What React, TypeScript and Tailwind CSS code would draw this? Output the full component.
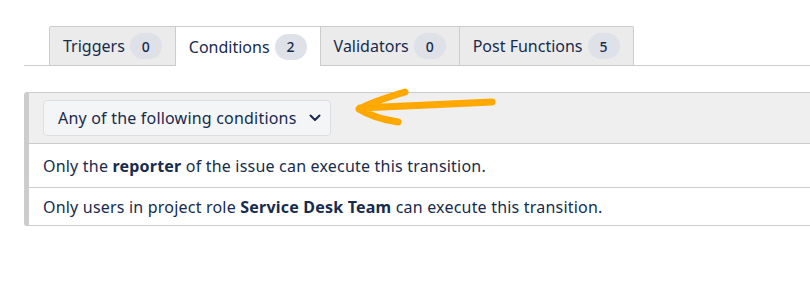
import * as React from "react";

type Tab = { label: string; count: number };

const tabs: Tab[] = [
  { label: "Triggers", count: 0 },
  { label: "Conditions", count: 2 },
  { label: "Validators", count: 0 },
  { label: "Post Functions", count: 5 },
];

const active = "Conditions";

function Chevron() {
  return (
    <svg width="12" height="8" viewBox="0 0 12 8" fill="none">
      <path d="M1.5 1.5 6 6l4.5-4.5" stroke="#172b4d" strokeWidth="2" strokeLinecap="round" strokeLinejoin="round" />
    </svg>
  );
}

// hand-drawn annotation arrow pointing at the dropdown
function Arrow() {
  return (
    <svg className="absolute left-[330px] top-[84px]" width="180" height="50" viewBox="0 0 180 50" fill="none">
      <path
        d="M162 18 C120 20 70 22 30 24 M75 8 C55 14 40 19 29 25 C40 32 55 36 68 38"
        stroke="#ffa800"
        strokeWidth="7"
        strokeLinecap="round"
        strokeLinejoin="round"
      />
    </svg>
  );
}

export default function App() {
  return (
    <div className="relative w-[810px] h-[290px] overflow-hidden bg-white pl-[24px] pt-[26px] text-[#172b4d] font-['Noto_Sans',sans-serif]">
      {/* tabs */}
      <div className="flex border-b border-[#cccccc] pl-[25px]">
        {tabs.map((t) => {
          const isActive = t.label === active;
          return (
            <div
              key={t.label}
              className={
                isActive
                  ? "-mb-px flex h-[40px] items-center gap-[5px] border-r border-t border-[#cccccc] bg-white pl-[13px] pr-[13px] text-[16px]"
                  : "flex h-[39px] items-center gap-[5px] border-r border-t border-[#cccccc] bg-[#ebebeb] pl-[13px] pr-[13px] text-[16px] first:border-l first:rounded-tl-[2px] last:rounded-tr-[2px]"
              }
            >
              <span>{t.label}</span>
              <span className="flex h-[26px] w-[32px] items-center justify-center rounded-full bg-[#dfe1e8] text-[14px] font-medium">
                {t.count}
              </span>
            </div>
          );
        })}
      </div>

      {/* conditions panel */}
      <div className="mt-[26px] w-[800px] rounded-l-[3px] border-y border-[#cccccc] border-l-[5px] tracking-[0.2px]">
        <div className="flex items-center border-b border-[#cccccc] bg-[#efefef] px-[14px] py-[7px]">
          <div className="flex h-[36px] w-[288px] items-center justify-between rounded-[4px] border border-[#dcdfe4] bg-[#f4f5f7] pl-[14px] pr-[9px] text-[16px]">
            <span>Any of the following conditions</span>
            <Chevron />
          </div>
        </div>
        <div className="flex h-[44px] items-center border-b border-[#cccccc] px-[14px] text-[16px]">
          <span>
            Only the <b className="font-bold">reporter</b> of the issue can execute this transition.
          </span>
        </div>
        <div className="flex h-[37px] items-center px-[14px] text-[16px]">
          <span>
            Only users in project role <b className="font-bold">Service Desk Team</b> can execute this transition.
          </span>
        </div>
      </div>

      <Arrow />
    </div>
  );
}
